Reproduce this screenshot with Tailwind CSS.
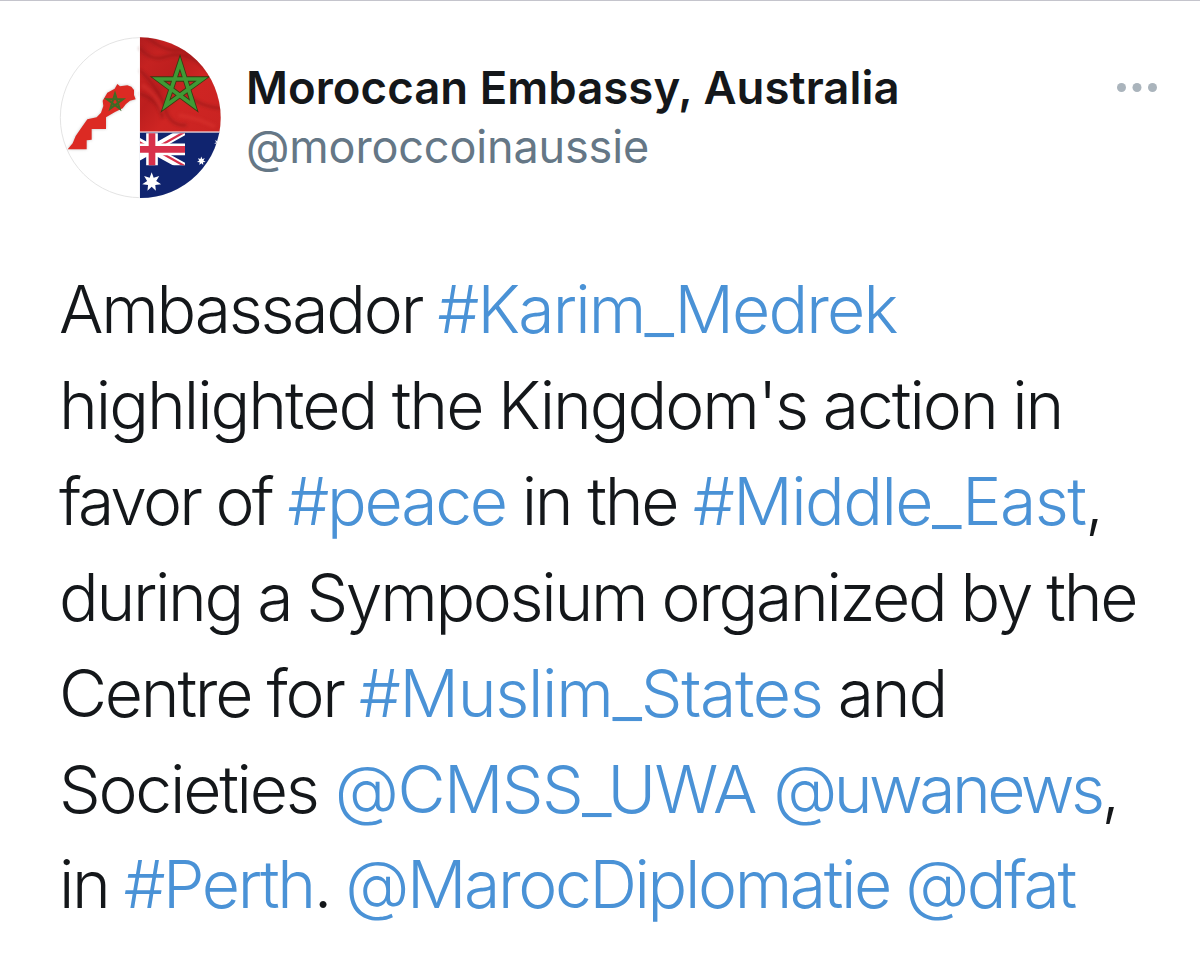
<!DOCTYPE html>
<html lang="en">
  <head>
    <meta charset="UTF-8" />
    <meta name="viewport" content="width=device-width, initial-scale=1.0" />
    <title>Moroccan Embassy, Australia</title>
    <script src="https://cdn.jsdelivr.net/npm/@tailwindcss/browser@4"></script>
  </head>
  <body class="bg-white h-[953px] overflow-hidden border-t border-[#c4c4cc] font-['Inter',sans-serif] text-[#14171a]">
    <article class="pt-9 pl-[59px] pr-[43px]">
      <header class="flex items-start">
        <svg class="size-[162px] shrink-0" viewBox="27 21 486 486" aria-hidden="true">
          <defs>
            <clipPath id="round"><circle cx="271" cy="263" r="241" /></clipPath>
            <clipPath id="jack"><rect x="270" y="310" width="135" height="96" /></clipPath>
            <linearGradient id="silk" x1="0" y1="0" x2="1" y2="1">
              <stop offset="0" stop-color="#b01c1e" />
              <stop offset=".2" stop-color="#c52221" />
              <stop offset=".4" stop-color="#bc1e1e" />
              <stop offset=".6" stop-color="#cf2523" />
              <stop offset="1" stop-color="#c92322" />
            </linearGradient>
            <filter id="soft"><feGaussianBlur stdDeviation="5" /></filter>
            <path id="map" d="M202 162L210 169 232 166 244 170 252 180 252 195 257 208 240 212 228 222 218 235 195 246 168 262 168 297 125 297 125 329 110 331 110 358 53 358 68 340 77 318 92 296 112 268 140 262 153 248 160 228 158 212 172 188 194 176z" />
            <path id="star" d="M0-29L6-12.6 22.7-18 13.6-3 28.3 6.5 10.9 8.7 12.6 26 0 14-12.6 26-10.9 8.7-28.3 6.5-13.6-3-22.7-18-6-12.6z" fill="#fff" />
          </defs>
          <circle cx="271" cy="263" r="240" fill="#fff" stroke="#e4e4e4" stroke-width="3" />
          <g clip-path="url(#round)">
            <!-- map -->
            <use href="#map" fill="#999" filter="url(#soft)" opacity=".6" />
            <use href="#map" fill="#dc2a23" />
            <path d="M195 191l14 45-38-28h48l-38 28z" fill="none" stroke="#3e6b24" stroke-width="6" />
            <!-- Morocco -->
            <rect x="269" y="15" width="245" height="290" fill="url(#silk)" />
            <g fill="none" stroke="#7d1216" stroke-width="9" opacity=".4" filter="url(#soft)">
              <path d="M268 52q35 45 80 28t95 15l70 60" />
              <path d="M290 20q50 45 90 40t80 50" />
              <path d="M270 120q60 60 75 115t65 50" />
              <path d="M268 190q60 20 70 75" />
              <path d="M400 180q40 50 115 55" />
            </g>
            <g fill="none" stroke="#e03a34" stroke-width="12" opacity=".4" filter="url(#soft)">
              <path d="M275 165q50 30 60 80" />
              <path d="M385 255q60 10 110 35" />
            </g>
            <path d="M390 98l41 129-108-80h134l-110 80z" fill="none" stroke="#3a3a12" stroke-width="16" />
            <path d="M390 98l41 129-108-80h134l-110 80z" fill="none" stroke="#3f9a35" stroke-width="11" />
            <!-- Australia -->
            <rect x="269" y="306" width="245" height="205" fill="#10246f" />
            <rect x="269" y="305" width="245" height="3" fill="#f1dfe2" />
            <g clip-path="url(#jack)">
              <path d="M306 358L405 302M306 358L405 412M306 358L207 302M306 358L207 412" stroke="#fff" stroke-width="24" />
              <path d="M306 361L409 303M306 353L409 411M306 358L207 302" stroke="#d8304a" stroke-width="7" />
              <path d="M306 300v110M260 358h150" stroke="#fff" stroke-width="35" />
              <path d="M306 300v110M260 358h150" stroke="#d8304a" stroke-width="20" />
            </g>
            <use href="#star" transform="translate(305 456)" />
            <use href="#star" transform="translate(454 393) scale(.46)" />
            <use href="#star" transform="translate(504 338) scale(.4)" />
          </g>
          <path d="M268 22v482" stroke="#fff" stroke-width="3" />
        </svg>

        <div class="ml-[25px] mt-6 whitespace-nowrap">
          <h1 class="text-[45.5px] leading-[54px] tracking-[0.04px] font-semibold">Moroccan Embassy, Australia</h1>
          <p class="mt-[5px] text-[45px] leading-[54px] tracking-[-0.15px] text-[#657786]">@moroccoinaussie</p>
        </div>

        <svg class="ml-auto mt-[46px] w-10 h-[9px]" viewBox="0 0 40 9" fill="#aab4bc" aria-label="More">
          <circle cx="4.5" cy="4.5" r="4.5" />
          <circle cx="20" cy="4.5" r="4.5" />
          <circle cx="35.5" cy="4.5" r="4.5" />
        </svg>
      </header>

      <div class="mt-[63px] text-[66px] leading-[95.9px] font-[350] tracking-[-2.25px] [word-spacing:-1px] whitespace-nowrap">
        <p>Ambassador <span class="text-[#4a92d6] tracking-[-1.85px]">#Karim_Medrek</span></p>
        <p class="tracking-[-2.03px]">highlighted the Kingdom's action in</p>
        <p class="[word-spacing:-0.5px]"><span class="tracking-[-2.8px]">favor of</span> <span class="text-[#4a92d6]">#peace</span> in the <span class="text-[#4a92d6] tracking-[-1.55px]">#Middle_East</span>,</p>
        <p class="tracking-[-2.33px]">during a Symposium organized by the</p>
        <p>Centre for <span class="text-[#4a92d6] tracking-[-1.3px]">#Muslim_States</span> and</p>
        <p class="[word-spacing:1px]">Societies <span class="text-[#4a92d6] tracking-[-1.55px]">@CMSS_UWA</span> <span class="text-[#4a92d6] tracking-[-3.55px]">@uwanews</span>,</p>
        <p class="tracking-[-2.38px]">in <span class="text-[#4a92d6]">#Perth</span>. <span class="text-[#4a92d6]">@MarocDiplomatie</span> <span class="text-[#4a92d6]">@dfat</span></p>
      </div>
    </article>
  </body>
</html>
